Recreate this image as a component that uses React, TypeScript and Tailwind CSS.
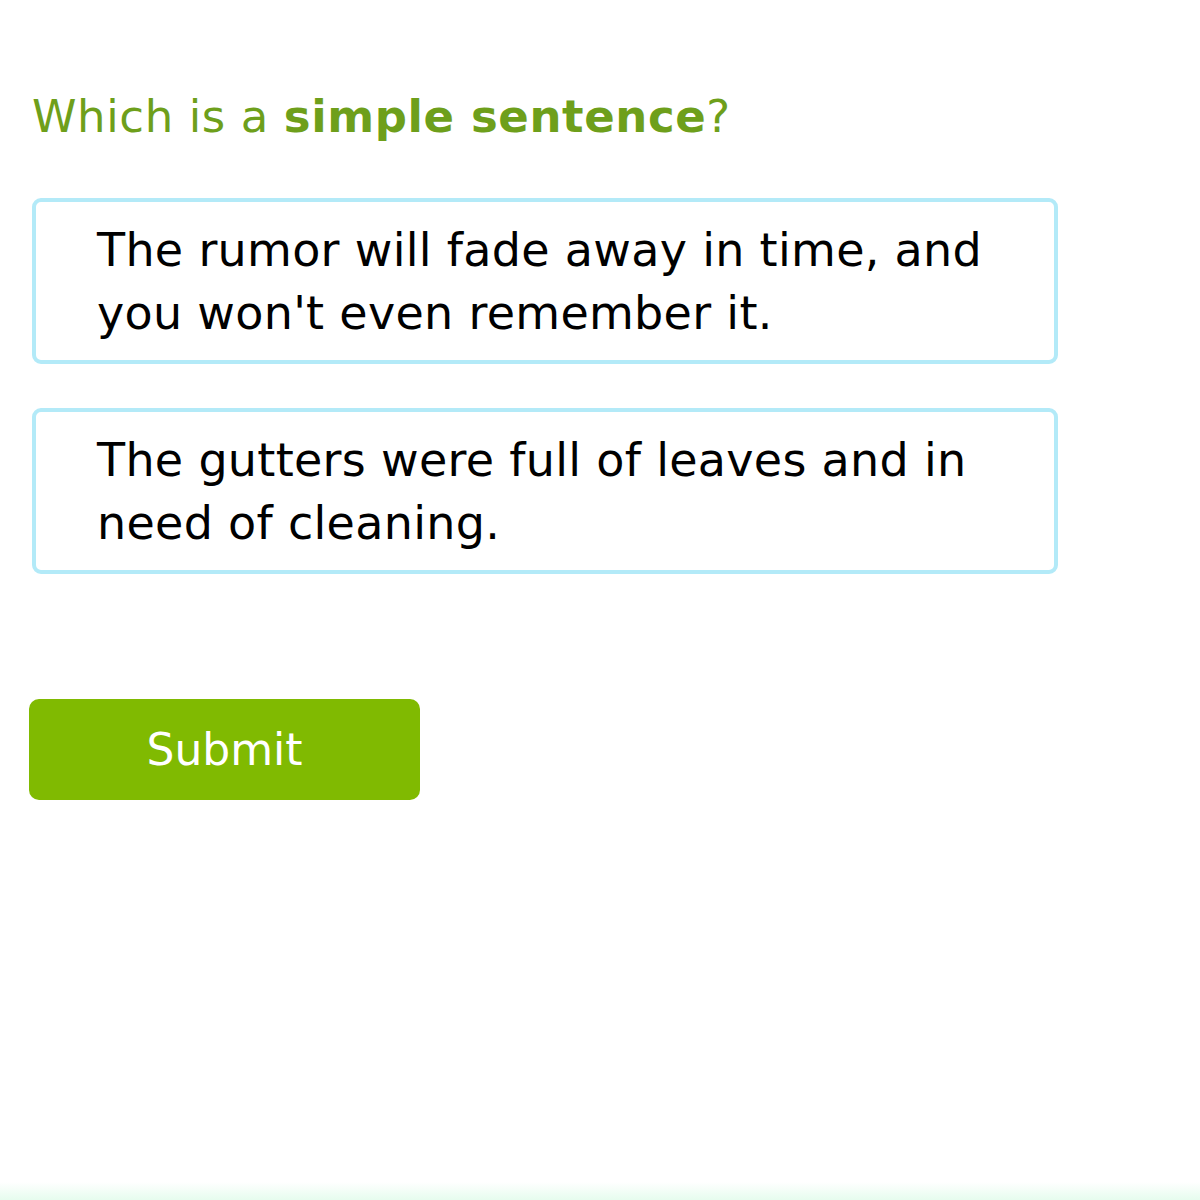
const choices = [
  "The rumor will fade away in time, and you won't even remember it.",
  'The gutters were full of leaves and in need of cleaning.',
];

export default function App() {
  return (
    <div className="relative min-h-[1200px] w-[1200px] bg-white font-['DejaVu_Sans',Verdana,sans-serif] overflow-hidden">
      <div className="pl-[32px] pt-[90px]">
        <h1 className="text-[45px] leading-[54px] tracking-[0.6px] text-[#6e9f1b] font-normal">
          Which is a <strong className="font-bold">simple sentence</strong>?
        </h1>
      </div>

      <div className="flex flex-col gap-[44px] pl-[32px] mt-[54px] w-[1058px]">
        {choices.map((c, i) => (
          <div
            key={i}
            className="border-[4px] border-[#b3eaf8] rounded-[9px] pl-[61px] pr-[40px] pt-[17px] pb-[15px] text-[46px] leading-[63px] tracking-[0.3px] text-black"
          >
            {c}
          </div>
        ))}
      </div>

      <div className="pl-[29px] mt-[125px]">
        <button className="w-[391px] h-[101px] rounded-[10px] bg-[#80ba01] text-white text-[44px]">
          Submit
        </button>
      </div>

      {/* faint green glow at the bottom edge */}
      <div className="absolute bottom-0 left-0 right-0 h-[18px] bg-gradient-to-b from-white to-[#e6fcee]" />
    </div>
  );
}
